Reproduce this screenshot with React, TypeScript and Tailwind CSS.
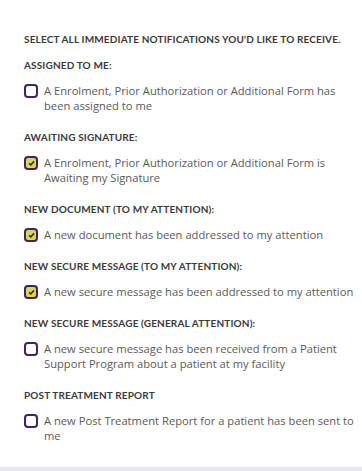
const sections = [
  {
    title: 'ASSIGNED TO ME:',
    text: 'A Enrolment, Prior Authorization or Additional Form has been assigned to me',
    checked: false,
  },
  {
    title: 'AWAITING SIGNATURE:',
    text: 'A Enrolment, Prior Authorization or Additional Form is Awaiting my Signature',
    checked: true,
  },
  {
    title: 'NEW DOCUMENT (TO MY ATTENTION):',
    text: 'A new document has been addressed to my attention',
    checked: true,
  },
  {
    title: 'NEW SECURE MESSAGE (TO MY ATTENTION):',
    text: 'A new secure message has been addressed to my attention',
    checked: true,
  },
  {
    title: 'NEW SECURE MESSAGE (GENERAL ATTENTION):',
    text: 'A new secure message has been received from a Patient Support Program about a patient at my facility',
    checked: false,
  },
  {
    title: 'POST TREATMENT REPORT',
    text: 'A new Post Treatment Report for a patient has been sent to me',
    checked: false,
  },
];

const CheckBox = ({ checked }: { checked: boolean }) => (
  <span
    className={`mt-[1px] flex h-[14px] w-[14px] shrink-0 items-center justify-center rounded-[4px] border-2 border-[#3f2263] ${
      checked ? 'bg-[#d6db4e]' : 'bg-white'
    }`}
  >
    {checked && (
      <svg width="7" height="6" viewBox="0 0 7 6">
        <path d="M1 3.4 L2.8 4.8 L6 1.4" stroke="#3f2263" strokeWidth="1.6" fill="none" />
      </svg>
    )}
  </span>
);

export default function App() {
  return (
    <div className="flex h-[471px] w-[362px] flex-col overflow-hidden bg-white font-['Open_Sans',sans-serif]">
      <div className="flex-1 pl-6 pr-1 pt-[32px]">
        <h2 className="font-['Lato',sans-serif] text-[10px] font-bold leading-[14px] tracking-[0.15px] text-[#3a3a3a]">
          SELECT ALL IMMEDIATE NOTIFICATIONS YOU'D LIKE TO RECEIVE.
        </h2>
        <div className="mt-[12px] flex flex-col gap-[17px]">
          {sections.map((s) => (
            <div key={s.title}>
              <h3 className="font-['Lato',sans-serif] text-[10px] font-bold leading-[14px] tracking-[0.15px] text-[#3a3a3a]">
                {s.title}
              </h3>
              <label className="mt-[11px] flex gap-[6px]">
                <CheckBox checked={s.checked} />
                <span className="text-[11.2px] leading-[15px] text-[#5a5a5a]">{s.text}</span>
              </label>
            </div>
          ))}
        </div>
      </div>
      <div className="h-[4px] shrink-0 bg-[#e8e6ee]" />
    </div>
  );
}
